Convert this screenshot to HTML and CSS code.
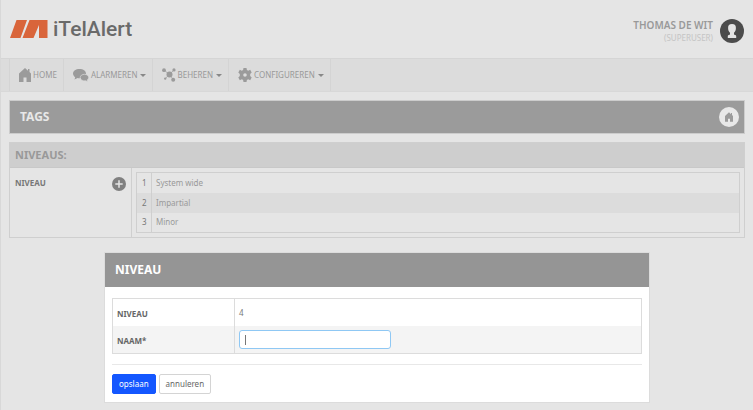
FILE: index.html
```html
<!DOCTYPE html>
<html lang="nl">
<head>
<meta charset="utf-8">
<meta name="viewport" content="width=device-width, initial-scale=1">
<title>iTelAlert</title>
<link rel="stylesheet" href="styles.css">
</head>
<body>
<header class="header">
  <a class="brand" href="#">
    <svg class="brand-mark" viewBox="0 0 38 18" aria-hidden="true"><path d="M6.500 0H17L10.500 18H0zM19.500 0H37.500V18H29V5L23.500 18H12.500z"/></svg>
    <span>iTelAlert</span>
  </a>
  <div class="user">
    <div class="user-text">
      <div class="user-name">THOMAS DE WIT</div>
      <div class="user-role">(SUPERUSER)</div>
    </div>
    <svg class="avatar" viewBox="0 0 24 24" aria-hidden="true"><circle cx="12" cy="12" r="12" fill="#4c4c4c"/><path fill="#e5e5e5" d="M12 5c-2.800 0-4 1.600-3.900 4 0 2 .6 3.700 1.900 4.700v1.500c0 .8-2.200.5-2.200 1.800v2h8.400v-2c0-1.300-2.200-1-2.200-1.800v-1.500c1.300-1 1.900-2.700 1.900-4.700.1-2.400-1.100-4-3.900-4z"/></svg>
  </div>
</header>
<nav class="nav">
  <a class="nav-item" href="#"><svg class="icon-home" viewBox="0 0 12 14" aria-hidden="true"><path d="M6 0 0 5.500V14H4.500V9.500H7.500V14H12V5.500L10.500 4V1H9V2.700z"/></svg>HOME</a>
  <a class="nav-item" href="#"><svg class="icon-chat" viewBox="0 0 16 13" aria-hidden="true"><path d="M6.500 0C2.800 0 0 2 0 4.600c0 1.500.9 2.800 2.200 3.600L1.500 10.500 4.600 9c.6.100 1.200.2 1.900.2C10.200 9.200 13 7.200 13 4.600S10.200 0 6.500 0z"/><path stroke="#dcdcdc" stroke-width=".7" d="M11.500 5.300c2.400 0 4.200 1.400 4.200 3.200 0 1-.6 1.900-1.400 2.500l.7 1.700-2.300-.9c-2.900.5-5.500-1.100-5.500-3.300 0-1.800 1.900-3.200 4.300-3.200z"/></svg>ALARMEREN<span class="caret"></span></a>
  <a class="nav-item nav-spaced" href="#"><svg class="icon-nodes" viewBox="0 0 14 14" aria-hidden="true"><path fill="none" stroke="#9b9b9b" stroke-width=".7" d="m2 2 5.300 4.500L12 2M7.300 6.500l4 5M7.300 6.500l-4 4"/><circle cx="7.500" cy="6.500" r="3"/><circle cx="2" cy="2.200" r="1.900"/><circle cx="12" cy="1.900" r="1.600"/><circle cx="3.200" cy="10.600" r="1.200"/><circle cx="11.200" cy="11.700" r="2"/></svg>BEHEREN<span class="caret"></span></a>
  <a class="nav-item nav-spaced" href="#"><svg class="icon-gear" viewBox="0 0 14 14" aria-hidden="true"><path fill-rule="evenodd" d="M5.500 0h3l.4 2 1.300.7 2-.9 1.500 2.600-1.500 1.500v2.200l1.500 1.500-1.500 2.600-2-.9-1.300.7-.4 2h-3l-.4-2-1.300-.7-2 .9L.3 9.600l1.500-1.500V5.900L.3 4.400l1.500-2.600 2 .9L5.100 2zM7 5.200a1.800 1.800 0 1 0 0 3.600 1.800 1.800 0 0 0 0-3.600z"/></svg>CONFIGUREREN<span class="caret"></span></a>
</nav>
<main class="content">
  <div class="title-bar">
    <h1>TAGS</h1>
    <a class="home-link" href="#" aria-label="Home"><svg viewBox="0 0 12 14" aria-hidden="true"><path d="M6 0 0 5.500V14H4.500V9.500H7.500V14H12V5.500L10.500 4V1H9V2.700z"/></svg></a>
  </div>
  <section class="panel">
    <h2>NIVEAUS:</h2>
    <div class="panel-body">
      <div class="panel-label"><span>NIVEAU</span>
        <button class="add" type="button" aria-label="Niveau toevoegen"><svg viewBox="0 0 14 14" aria-hidden="true"><circle cx="7" cy="7" r="7" fill="#808080"/><path d="M7 3.300v7.400M3.300 7h7.400" stroke="#e5e5e5" stroke-width="1.500"/></svg></button>
      </div>
      <div class="panel-value">
        <table class="levels">
          <tr><th scope="row">1</th><td>System wide</td></tr>
          <tr><th scope="row">2</th><td>Impartial</td></tr>
          <tr><th scope="row">3</th><td>Minor</td></tr>
        </table>
      </div>
    </div>
  </section>
</main>
<form class="dialog" role="dialog" aria-labelledby="dialog-title">
  <h2 id="dialog-title">NIVEAU</h2>
  <div class="dialog-body">
    <div class="fields">
      <div class="field"><div class="field-label">NIVEAU</div><div class="field-value">4</div></div>
      <div class="field"><label class="field-label" for="naam">NAAM*</label><div class="field-value"><input id="naam" type="text"></div></div>
    </div>
    <div class="actions">
      <button class="btn btn-primary" type="submit">opslaan</button>
      <button class="btn" type="button">annuleren</button>
    </div>
  </div>
</form>
</body>
</html>
```
FILE: styles.css
```css
* { box-sizing: border-box; }
body {
  position: relative;
  min-height: 100vh;
  margin: 0;
  border-left: 1px solid #d8d8d8;
  background: #e5e5e5;
  color: #999;
  font: 8px/12px "Noto Sans", sans-serif;
}
h1, h2 { margin: 0; }
a { color: inherit; text-decoration: none; }
svg { display: block; flex: none; fill: #9b9b9b; }

.header {
  display: flex;
  align-items: center;
  justify-content: space-between;
  height: 58px;
  padding: 0 9px;
}
.brand {
  display: flex;
  align-items: center;
  gap: 5px;
  color: #6a6a6a;
  font: 500 21px/24px Roboto, sans-serif;
}
.brand-mark { width: 38px; height: 18px; fill: #d9653b; }
.user { display: flex; align-items: center; gap: 7px; padding-top: 4px; text-align: right; }
.user-name { font-size: 10px; font-weight: 600; line-height: 14px; }
.user-role { color: #c4c4c4; }
.avatar { width: 24px; height: 24px; }

.nav {
  display: flex;
  height: 34px;
  padding-left: 8px;
  border-top: 1px solid #d5d5d5;
  border-bottom: 1px solid #d8d8d8;
  background: #dcdcdc;
}
.nav-item {
  display: flex;
  align-items: center;
  gap: 2px;
  padding: 0 6px 0 9px;
  border-right: 1px solid #d4d4d4;
}
.nav-item:first-child { border-left: 1px solid #d4d4d4; }
.caret {
  border: 3px solid transparent;
  border-top-color: #888;
  border-bottom: 0;
}
.nav-spaced .caret { margin-left: 1px; }
.icon-home { width: 12px; height: 14px; }
.icon-chat { width: 16px; height: 13px; }
.icon-nodes, .icon-gear { width: 14px; height: 14px; }

.content { padding: 8px 8px 16px; }
.title-bar {
  display: flex;
  align-items: center;
  justify-content: space-between;
  height: 34px;
  padding: 0 5px 0 10px;
  border: 1px solid #ccc;
  background: #9b9b9b;
}
.title-bar h1 { color: #e8e8e8; font-size: 12px; line-height: 16px; }
.home-link {
  display: grid;
  place-items: center;
  width: 20px;
  height: 20px;
  border-radius: 50%;
  background: #e8e8e8;
}
.home-link svg { width: 8px; height: 10px; }

.panel { margin-top: 8px; border: 1px solid #cfcfcf; }
.panel h2 {
  padding: 4px 5px;
  border-bottom: 1px solid #c8c8c8;
  background: #cecece;
  font-size: 11px;
  line-height: 16px;
}
.panel-body { display: grid; grid-template-columns: 122px 1fr; }
.panel-label {
  display: flex;
  align-items: flex-start;
  justify-content: space-between;
  padding: 9px 5px;
  border-right: 1px solid #cfcfcf;
  color: #777;
  font-weight: 700;
}
.add { padding: 0; border: 0; background: none; }
.add svg { width: 14px; height: 14px; }
.panel-value { padding: 4px; }
.levels {
  width: 100%;
  border: 1px solid #cfcfcf;
  border-collapse: collapse;
}
.levels th, .levels td { height: 20px; padding: 0 4px; font-weight: 400; text-align: left; }
.levels th { width: 15px; padding-left: 5px; border-right: 1px solid #cfcfcf; color: #777; }
.levels tr:nth-child(even) { background: #dcdcdc; }

.dialog {
  position: absolute;
  top: 252px;
  right: 103px;
  left: 103px;
  border: 1px solid #dcdcdc;
  background: #fff;
  color: #777;
}
.dialog h2 {
  padding: 9px 10px;
  background: #959595;
  color: #fff;
  font-size: 12px;
  line-height: 16px;
}
.dialog-body { padding: 11px 7px 8px; }
.fields { border: 1px solid #dcdcdc; }
.field { display: grid; grid-template-columns: 122px 1fr; height: 27px; }
.field:nth-child(even) { background: #f4f4f4; }
.field-label {
  padding: 9px 4px 0;
  border-right: 1px solid #dcdcdc;
  color: #666;
  font-weight: 700;
}
.field-value { padding: 8px 4px 0; }
.field-value:has(input) { padding-top: 4px; }
.field input {
  display: block;
  width: 152px;
  height: 19px;
  padding: 0 5px;
  border: 1px solid #8fc8f4;
  border-radius: 3px;
  outline: 0;
  background: #fff linear-gradient(#777, #777) 5px center / 1px 10px no-repeat;
  color: #555;
  font: 9px/12px "Noto Sans", sans-serif;
}
.field input:focus { background-image: none; }
.actions {
  display: flex;
  gap: 3px;
  margin-top: 10px;
  padding-top: 9px;
  border-top: 1px solid #e8e8e8;
}
.btn {
  height: 20px;
  padding: 0 6px;
  border: 1px solid #d4d4d4;
  border-radius: 2px;
  background: #fff;
  color: #666;
  font: 8px/12px "Noto Sans", sans-serif;
}
.btn-primary { border-color: #1457ff; background: #1457ff; color: #fff; }
```
